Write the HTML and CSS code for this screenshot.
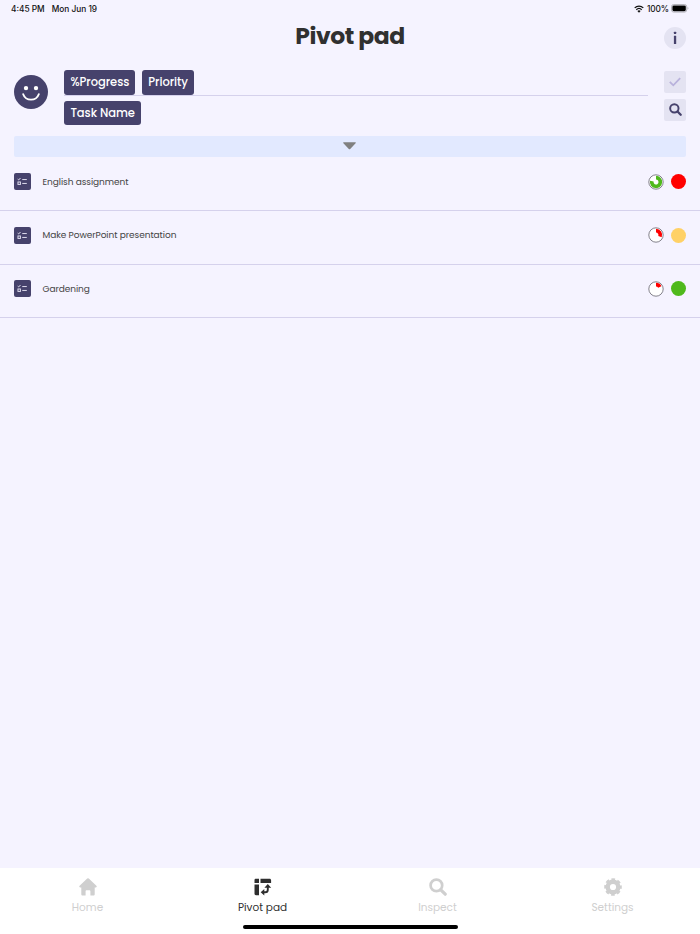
FILE: index.html
```
<!DOCTYPE html>
<html lang="en">
<head>
<meta charset="UTF-8">
<meta name="viewport" content="width=device-width, initial-scale=1.0">
<title>Pivot pad</title>
<link rel="stylesheet" href="styles.css">
</head>
<body>

<!-- shared icons -->
<svg class="defs" width="0" height="0">
<symbol id="task" viewBox="0 0 17 17">
<path d="M3.8 6.1l1 .8 1.9-2M8.5 6.5h4.7M8.5 10.5h4.7" fill="none" stroke="#e4e1f2" stroke-width="1"/>
<rect x="4.1" y="9" width="2.5" height="2.5" fill="none" stroke="#e4e1f2" stroke-width="1"/>
</symbol>
<symbol id="search" viewBox="0 0 18 18">
<circle cx="7.4" cy="7.4" r="5.8" fill="none" stroke="currentColor" stroke-width="2.7"/>
<path d="M11.8 11.8l4.4 4.4" stroke="currentColor" stroke-width="3.2" stroke-linecap="round"/>
</symbol>
</svg>

<div class="status">
<span class="time">4:45 PM</span>
<span class="date">Mon Jun 19</span>
<svg class="wifi" width="10" height="8" viewBox="0 0 10 8">
<path d="M.7 2.9a6.2 6.2 0 0 1 8.6 0M2.3 4.7a3.9 3.9 0 0 1 5.4 0" fill="none" stroke="#111" stroke-width="1.3"/>
<path d="M5 7.7L3.4 6.1a2.3 2.3 0 0 1 3.2 0z" fill="#111"/>
</svg>
<span class="percent">100%</span>
<svg width="18" height="9" viewBox="0 0 18 9">
<rect x=".5" y=".5" width="15.2" height="7.6" rx="2.2" fill="none" stroke="#a5a4ab" stroke-width=".8"/>
<rect x="1.4" y="1.4" width="13.4" height="5.8" rx="1.4" fill="#000"/>
<path d="M16.6 3c1 .4 1 2.2 0 2.6z" fill="#a5a4ab"/>
</svg>
</div>

<header>
<h1>Pivot pad</h1>
<button class="info" aria-label="Info">
<svg width="22" height="22" viewBox="0 0 22 22"><rect x="9.9" y="4.7" width="2.3" height="2.3" rx=".6" fill="#46426c"/><rect x="9.9" y="8.7" width="2.3" height="8.4" rx=".3" fill="#46426c"/></svg>
</button>
</header>

<section class="pivot">
<svg class="face" width="34" height="34" viewBox="0 0 34 34">
<circle cx="17" cy="17" r="17" fill="#46426c"/>
<circle cx="12" cy="13.1" r="2.2" fill="#fff"/>
<circle cx="22" cy="13.1" r="2.2" fill="#fff"/>
<path d="M9.2 19.2a8.3 8.3 0 0 0 15.6 0" fill="none" stroke="#fff" stroke-width="1.9" stroke-linecap="round"/>
</svg>
<div class="fields">
<div class="columns"><span class="chip progress">%Progress</span><span class="chip priority">Priority</span></div>
<div class="rows"><span class="chip name">Task Name</span></div>
</div>
<div class="tools">
<button aria-label="Apply"><svg width="22" height="22" viewBox="0 0 22 22"><path d="M5.8 10.8l3.5 3.5 6.9-7.1" fill="none" stroke="#b9b2dc" stroke-width="1.8"/></svg></button>
<button aria-label="Search"><svg width="13" height="13"><use href="#search"/></svg></button>
</div>
</section>

<button class="expand" aria-label="Expand"><svg width="13" height="8" viewBox="0 0 13 8"><path d="M.9.3h11.2c.7 0 .9.6.5 1L7.2 6.9a1 1 0 0 1-1.4 0L.4 1.3C0 .9.2.3.9.3z" fill="#808080"/></svg></button>

<ul class="tasks">
<li>
<svg class="task-icon"><use href="#task"/></svg>
<span>English assignment</span>
<svg class="pie" viewBox="0 0 16 16"><circle cx="8" cy="8" r="7.2"/><path d="M8 3.7A4.3 4.3 0 1 1 3.8 7.2" fill="none" stroke="#4fb91c" stroke-width="3.7"/></svg>
<i class="dot red"></i>
</li>
<li>
<svg class="task-icon"><use href="#task"/></svg>
<span>Make PowerPoint presentation</span>
<svg class="pie" viewBox="0 0 16 16"><circle cx="8" cy="8" r="7.2"/><path d="M8 3.7A4.3 4.3 0 0 1 12 9.6" fill="none" stroke="#f00" stroke-width="3.7"/></svg>
<i class="dot yellow"></i>
</li>
<li>
<svg class="task-icon"><use href="#task"/></svg>
<span>Gardening</span>
<svg class="pie" viewBox="0 0 16 16"><circle cx="8" cy="8" r="7.2"/><path d="M8 3.7A4.3 4.3 0 0 1 11.8 6" fill="none" stroke="#f00" stroke-width="3.7"/></svg>
<i class="dot green"></i>
</li>
</ul>

<footer>
<nav>
<a>
<svg width="18" height="18" viewBox="0 0 18 18"><path d="M8.2.6a1.2 1.2 0 0 1 1.6 0l7.6 7.2c.7.7.4 1.6-.5 1.6h-1.2v6.9c0 .8-.5 1.3-1.3 1.3h-3v-4.2c0-.7-.4-1.2-1-1.2H7.6c-.6 0-1 .5-1 1.2v4.2h-3c-.8 0-1.3-.5-1.3-1.3V9.4H1.1c-.9 0-1.2-.9-.5-1.6z" fill="currentColor"/></svg>
<span>Home</span>
</a>
<a class="active">
<svg width="18" height="18" viewBox="0 0 18 18">
<g fill="currentColor"><path d="M2 .8h3v4.1H.5V2.2C.5 1.3 1.1.8 2 .8zM6.5.8h9c1 0 1.6.6 1.6 1.5v2.6H6.5zM.5 6.5H5v10.7H2c-.9 0-1.5-.5-1.5-1.4z"/><path d="M13.8 6.1l3.4 3.6h-6.8zM10.3 11v6.6l-3.6-3.3z"/></g>
<path d="M13.8 8.5v3.2c0 1.8-.8 2.6-2.6 2.6H9.5" fill="none" stroke="currentColor" stroke-width="1.9"/>
</svg>
<span>Pivot pad</span>
</a>
<a>
<svg width="18" height="18"><use href="#search"/></svg>
<span>Inspect</span>
</a>
<a>
<svg width="18" height="18" viewBox="0 0 18 18">
<circle cx="9" cy="9" r="5.3" fill="none" stroke="currentColor" stroke-width="4.4"/>
<circle cx="9" cy="9" r="7.6" fill="none" stroke="currentColor" stroke-width="2.4" stroke-dasharray="3.6 2.369" stroke-dashoffset="1.8"/>
</svg>
<span>Settings</span>
</a>
</nav>
<div class="bar"></div>
</footer>

</body>
</html>
```
FILE: styles.css
```
* {
box-sizing: border-box;
}

body {
margin: 0;
height: 100vh;
display: flex;
flex-direction: column;
overflow: hidden;
background-color: #f5f3ff;
color: #303030;
font-family: Poppins, Inter, sans-serif;
}

svg {
display: block;
flex: none;
}

.defs {
position: absolute;
}

button {
border: 0;
padding: 0;
display: flex;
align-items: center;
justify-content: center;
background-color: #e4e3f2;
}

.status {
height: 17px;
padding: 0 11px;
display: flex;
align-items: center;
font-family: Inter, sans-serif;
font-size: 8.3px;
font-weight: 500;
color: #111;
}

.date {
margin-left: 7px;
}

.wifi {
margin-left: auto;
}

.percent {
margin: 0 2px 0 3px;
letter-spacing: -.1px;
}

header {
height: 53px;
padding: 10px 14px 0;
display: grid;
grid-template-columns: 22px 1fr 22px;
}

h1 {
grid-column: 2;
margin: -6.5px 0 0;
text-align: center;
font-size: 23.5px;
line-height: 30px;
font-weight: 700;
letter-spacing: -.45px;
}

.info {
width: 22px;
height: 22px;
border-radius: 50%;
}

.pivot {
height: 65.5px;
padding: 0 14px;
display: flex;
}

.face {
margin-top: 4.5px;
}

.fields {
width: 584px;
margin-left: 16.4px;
}

.columns {
height: 26px;
display: flex;
gap: 6.5px;
border-bottom: 1.5px solid #d5d1ec;
}

.rows {
margin-top: 4.5px;
display: flex;
}

.chip {
height: 24.5px;
display: flex;
align-items: center;
justify-content: center;
border-radius: 3px;
background-color: #46426c;
color: #fff;
font-size: 11.5px;
font-weight: 500;
letter-spacing: -.05px;
white-space: nowrap;
}

.progress {
width: 71px;
}

.priority {
width: 52.5px;
}

.name {
width: 76.5px;
padding-top: 1px;
}

.tools {
margin: .5px 0 0 auto;
display: flex;
flex-direction: column;
gap: 6px;
}

.tools button {
width: 22px;
height: 22px;
border-radius: 2px;
color: #46426c;
}

.expand {
height: 21.5px;
margin: 0 14px;
padding-right: 1px;
flex: none;
border-radius: 2px;
background-color: #e2e9ff;
}

.tasks {
margin: 0;
padding: 0;
list-style: none;
}

.tasks li {
height: 53.5px;
padding: 0 14px 4px;
display: flex;
align-items: center;
border-bottom: 1px solid #d5d1ec;
font-size: 9px;
color: #444;
}

.tasks li:first-child {
height: 54px;
}

.tasks span {
padding-top: 1px;
letter-spacing: -.07px;
}

.task-icon {
width: 16.5px;
height: 17px;
margin-right: 12px;
border-radius: 2px;
background-color: #46426c;
}

.pie {
width: 16px;
height: 16px;
margin-left: auto;
}

.pie circle {
fill: #fff;
stroke: #77757f;
stroke-width: .9;
}

.dot {
width: 15px;
height: 15px;
margin-left: 7px;
border-radius: 50%;
}

.red {
background-color: #f00;
}

.yellow {
background-color: #ffd166;
}

.green {
background-color: #4fb91c;
}

footer {
height: 66px;
margin-top: auto;
padding-top: 10px;
background-color: #fff;
}

nav {
display: flex;
}

nav a {
flex: 1;
display: flex;
flex-direction: column;
align-items: center;
gap: 4px;
color: #cfcfcf;
font-size: 10.5px;
line-height: 16px;
}

nav .active {
color: #2e2e2e;
}

.bar {
width: 215px;
height: 4px;
margin: 8.5px auto 0;
border-radius: 2px;
background-color: #000;
}
```
